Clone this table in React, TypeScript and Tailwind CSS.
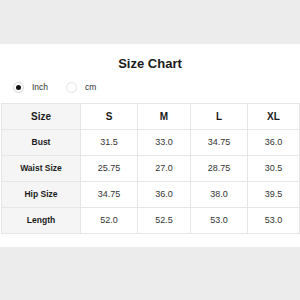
import React from "react";

const headers = ["S", "M", "L", "XL"];
const rows: [string, string[]][] = [
  ["Bust", ["31.5", "33.0", "34.75", "36.0"]],
  ["Waist Size", ["25.75", "27.0", "28.75", "30.5"]],
  ["Hip Size", ["34.75", "36.0", "38.0", "39.5"]],
  ["Length", ["52.0", "52.5", "53.0", "53.0"]],
];
const widths = ["w-[79px]", "w-[57px]", "w-[53px]", "w-[57px]", "w-[52px]"];

export default function App() {
  return (
    <div
      className="w-[300px] h-[300px] bg-[#ececec] flex flex-col overflow-hidden"
      style={{ fontFamily: '"Liberation Sans", Arial, sans-serif' }}
    >
      <div className="h-[44px] shrink-0" />
      <div className="bg-white h-[203px] shrink-0 flex flex-col">
        <div className="mt-[12px] h-[16px] leading-[16px] text-center text-[13px] font-bold text-[#1a1a1a]">
          Size Chart
        </div>
        <div className="mt-[9px] h-[12px] flex items-center text-[8.5px] text-[#333]">
          <div className="ml-[13px] w-[11px] h-[11px] rounded-full border border-[#d9d9d9] flex items-center justify-center">
            <div className="w-[5px] h-[5px] rounded-full bg-[#111]" />
          </div>
          <span className="ml-[8px]">Inch</span>
          <div className="ml-[18px] w-[11px] h-[11px] rounded-full border border-[#e3e3e3]" />
          <span className="ml-[8px]">cm</span>
        </div>
        <div className="mt-[10px] ml-[1px] flex flex-col border-t border-l border-[#e6e6e6] w-[299px]">
          <div className="flex">
            <div className={`${widths[0]} h-[26px] bg-[#f5f5f5] border-r border-b border-[#e6e6e6] flex items-center justify-center text-[10px] font-bold text-[#1a1a1a]`}>
              Size
            </div>
            {headers.map((h, i) => (
              <div
                key={h}
                className={`${widths[i + 1]} h-[26px] border-r border-b border-[#e6e6e6] flex items-center justify-center text-[10px] font-bold text-[#1a1a1a]`}
              >
                {h}
              </div>
            ))}
          </div>
          {rows.map(([label, vals]) => (
            <div key={label} className="flex">
              <div className={`${widths[0]} h-[26px] bg-[#f5f5f5] border-r border-b border-[#e6e6e6] flex items-center justify-center text-[8.5px] font-bold text-[#1a1a1a]`}>
                {label}
              </div>
              {vals.map((v, i) => (
                <div
                  key={i}
                  className={`${widths[i + 1]} h-[26px] border-r border-b border-[#e6e6e6] flex items-center justify-center text-[9px] text-[#333]`}
                >
                  {v}
                </div>
              ))}
            </div>
          ))}
        </div>
      </div>
    </div>
  );
}
